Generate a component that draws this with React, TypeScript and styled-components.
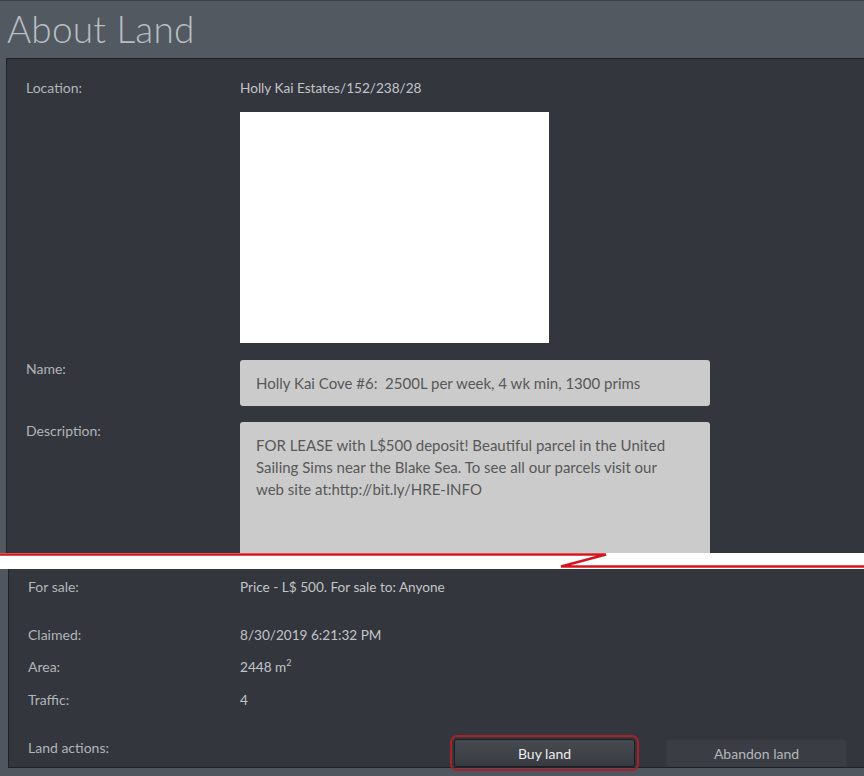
import { createGlobalStyle, styled } from 'styled-components';

const GlobalStyle = createGlobalStyle`
  html, body {
    margin: 0;
    padding: 0;
    background: #50565d;
  }
  body {
    font-family: Lato, "Open Sans", "Liberation Sans", sans-serif;
  }
`;

const Page = styled.div`
  width: 864px;
  height: 776px;
  overflow: hidden;
  background: #50565d;
`;

const Upper = styled.div`
  height: 553px;
  overflow: hidden;
  background: #525961;
`;

const Header = styled.header`
  height: 58px;
  box-sizing: border-box;
  border-top: 1px solid #3c4147;
  padding-left: 7px;
  display: flex;
  align-items: center;
`;

const Title = styled.h1`
  margin: 0;
  font-family: Lato, "Open Sans", sans-serif;
  font-weight: 300;
  font-size: 37px;
  letter-spacing: 0.2px;
  color: #b9bdc1;
  line-height: 1;
  padding-bottom: 2px;
`;

const Panel = styled.section<{ $left: number; $pad: number; $height?: number }>`
  margin-left: ${(p) => p.$left}px;
  background: #33363d;
  border-left: 1px solid #1f2227;
  border-top: ${(p) => (p.$height ? 'none' : '1px solid #1f2227')};
  border-bottom: ${(p) => (p.$height ? '1px solid #1f2227' : 'none')};
  box-sizing: border-box;
  height: ${(p) => (p.$height ? `${p.$height}px` : 'auto')};
  padding: ${(p) => p.$pad}px 0 0 19px;
`;

const Row = styled.div<{ $gap?: number; $col?: number }>`
  display: grid;
  grid-template-columns: ${(p) => p.$col ?? 214}px 1fr;
  align-items: start;
  margin-top: ${(p) => p.$gap ?? 0}px;
`;

const Label = styled.div`
  font-size: 14px;
  line-height: 18px;
  color: #b1b5b9;
`;

const Value = styled.div`
  font-size: 13.6px;
  line-height: 18px;
  color: #c2c5c8;
  white-space: nowrap;

  sup {
    font-size: 9px;
    line-height: 0;
    vertical-align: 6px;
  }
`;

const Snapshot = styled.div`
  width: 309px;
  height: 231px;
  background: #ffffff;
`;

const Field = styled.div<{ $multi?: boolean }>`
  width: 470px;
  box-sizing: border-box;
  background: #cbcbcb;
  border-radius: 3px;
  color: #585858;
  font-size: 15px;
  white-space: nowrap;
  padding: ${(p) => (p.$multi ? '12px 16px' : '0 16px')};
  height: ${(p) => (p.$multi ? '200px' : '46px')};
  line-height: ${(p) => (p.$multi ? '22px' : '46px')};
`;

const Tear = styled.div`
  height: 16px;
  background: #ffffff;

  svg {
    display: block;
    width: 864px;
    height: 16px;
  }
`;

const Lower = styled.div`
  height: 207px;
  background: #50565d;
`;

const ActionsRow = styled.div`
  display: flex;
  align-items: flex-start;
  margin-top: 30px;
`;

const ActionLabel = styled(Label)`
  flex: 1;
`;

const Buttons = styled.div`
  display: flex;
  gap: 31px;
  padding-right: 17px;
`;

const Button = styled.button<{ $primary?: boolean }>`
  width: 181px;
  height: 28px;
  border-radius: 3px;
  font-family: Lato, "Open Sans", sans-serif;
  font-size: 14px;
  cursor: pointer;
  background: ${(p) => (p.$primary ? 'linear-gradient(#474a51, #383b41)' : '#3a3d44')};
  border: 1px solid ${(p) => (p.$primary ? '#1b1d21' : '#363940')};
  color: ${(p) => (p.$primary ? '#ededed' : '#b4b7ba')};
  outline: ${(p) => (p.$primary ? '2px solid #a8202a' : 'none')};
  outline-offset: 2px;
`;

export default function App() {
  return (
    <Page>
      <GlobalStyle />
      <Upper>
        <Header>
          <Title>About Land</Title>
        </Header>
        <Panel $left={6} $pad={20}>
          <Row>
            <Label>Location:</Label>
            <Value>Holly Kai Estates/152/238/28</Value>
          </Row>
          <Row $gap={15}>
            <span />
            <Snapshot />
          </Row>
          <Row $gap={17}>
            <Label>Name:</Label>
            <Field>Holly Kai Cove #6:&nbsp; 2500L per week, 4 wk min, 1300 prims</Field>
          </Row>
          <Row $gap={16}>
            <Label>Description:</Label>
            <Field $multi>
              FOR LEASE with L$500 deposit! Beautiful parcel in the United
              <br />
              Sailing Sims near the Blake Sea. To see all our parcels visit our
              <br />
              web site at:http://bit.ly/HRE-INFO
            </Field>
          </Row>
        </Panel>
      </Upper>
      <Tear>
        <svg viewBox="0 0 864 16" preserveAspectRatio="none">
          <polyline
            points="0,1.5 606,1.5 561,13.5 864,13.5"
            fill="none"
            stroke="#d7141d"
            strokeWidth="2.5"
          />
        </svg>
      </Tear>
      <Lower>
        <Panel $left={8} $pad={9} $height={199}>
          <Row $col={212}>
            <Label>For sale:</Label>
            <Value>Price - L$ 500. For sale to: Anyone</Value>
          </Row>
          <Row $col={212} $gap={30}>
            <Label>Claimed:</Label>
            <Value>8/30/2019 6:21:32 PM</Value>
          </Row>
          <Row $col={212} $gap={14}>
            <Label>Area:</Label>
            <Value>
              2448 m<sup>2</sup>
            </Value>
          </Row>
          <Row $col={212} $gap={15}>
            <Label>Traffic:</Label>
            <Value>4</Value>
          </Row>
          <ActionsRow>
            <ActionLabel>Land actions:</ActionLabel>
            <Buttons>
              <Button $primary>Buy land</Button>
              <Button>Abandon land</Button>
            </Buttons>
          </ActionsRow>
        </Panel>
      </Lower>
    </Page>
  );
}
